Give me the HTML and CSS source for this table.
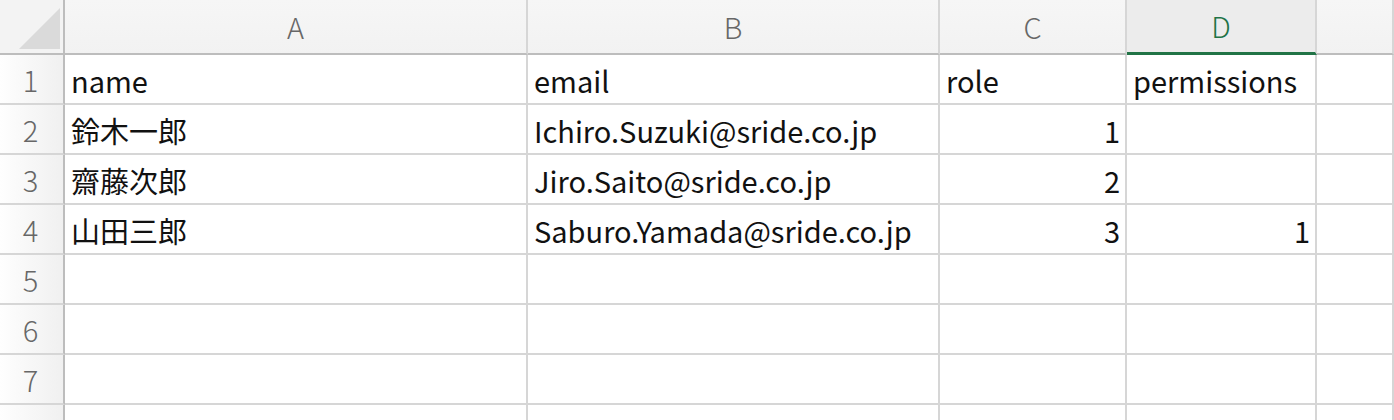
FILE: index.html
```html
<!DOCTYPE html>
<html lang="ja">
<head>
<meta charset="utf-8">
<title>Sheet</title>
<link rel="stylesheet" href="styles.css">
</head>
<body>
<div class="sheet">
  <div class="corner"><div class="tri"></div></div>
  <div class="colhead">A</div>
  <div class="colhead">B</div>
  <div class="colhead">C</div>
  <div class="colhead sel">D</div>
  <div class="colhead"></div>

  <div class="rowhead">1</div>
  <div class="cell">name</div>
  <div class="cell">email</div>
  <div class="cell">role</div>
  <div class="cell">permissions</div>
  <div class="cell"></div>

  <div class="rowhead">2</div>
  <div class="cell">鈴木一郎</div>
  <div class="cell">Ichiro.Suzuki@sride.co.jp</div>
  <div class="cell num">1</div>
  <div class="cell"></div>
  <div class="cell"></div>

  <div class="rowhead">3</div>
  <div class="cell">齋藤次郎</div>
  <div class="cell">Jiro.Saito@sride.co.jp</div>
  <div class="cell num">2</div>
  <div class="cell"></div>
  <div class="cell"></div>

  <div class="rowhead">4</div>
  <div class="cell">山田三郎</div>
  <div class="cell">Saburo.Yamada@sride.co.jp</div>
  <div class="cell num">3</div>
  <div class="cell num">1</div>
  <div class="cell"></div>

  <div class="rowhead">5</div>
  <div class="cell"></div><div class="cell"></div><div class="cell"></div><div class="cell"></div><div class="cell"></div>
  <div class="rowhead">6</div>
  <div class="cell"></div><div class="cell"></div><div class="cell"></div><div class="cell"></div><div class="cell"></div>
  <div class="rowhead">7</div>
  <div class="cell"></div><div class="cell"></div><div class="cell"></div><div class="cell"></div><div class="cell"></div>
  <div class="rowhead">8</div>
  <div class="cell"></div><div class="cell"></div><div class="cell"></div><div class="cell"></div><div class="cell"></div>
</div>
</body>
</html>
```

FILE: styles.css
```css
html, body {
  margin: 0;
  padding: 0;
  background: #ffffff;
  overflow: hidden;
}

.sheet {
  display: grid;
  grid-template-columns: 65px 463px 412px 187px 190px 1fr;
  grid-template-rows: 55px;
  grid-auto-rows: 50px;
  font-family: "Noto Sans CJK JP", "Noto Sans", sans-serif;
  font-size: 29px;
  color: #111111;
}

.corner {
  box-sizing: border-box;
  border-right: 2px solid #bdbdbd;
  border-bottom: 2px solid #bdbdbd;
  background: #f3f3f3;
  position: relative;
}

.tri {
  position: absolute;
  left: 19px;
  top: 8px;
  width: 41px;
  height: 41px;
  background: #dadada;
  clip-path: polygon(100% 0, 100% 100%, 0 100%);
}

.colhead {
  box-sizing: border-box;
  border-right: 2px solid #d6d6d6;
  border-bottom: 2px solid #bdbdbd;
  background: linear-gradient(#f6f6f6, #f2f2f2);
  color: #676767;
  font-weight: 300;
  font-size: 29px;
  display: flex;
  align-items: center;
  justify-content: center;
  padding-bottom: 2px;
}

.colhead.sel {
  background: #ececec;
  color: #217346;
  border-bottom: 3px solid #217346;
}

.rowhead {
  box-sizing: border-box;
  border-right: 2px solid #bdbdbd;
  border-bottom: 2px solid #d6d6d6;
  background: linear-gradient(to right, #fefefe, #f0f0f0);
  color: #676767;
  font-weight: 300;
  font-size: 29px;
  display: flex;
  align-items: center;
  justify-content: center;
  padding-right: 2px;
}

.cell {
  box-sizing: border-box;
  border-right: 2px solid #d6d6d6;
  border-bottom: 2px solid #d6d6d6;
  display: flex;
  align-items: center;
  padding: 1px 5px 0 6px;
  white-space: nowrap;
  overflow: hidden;
}

.cell.num {
  justify-content: flex-end;
}
```
